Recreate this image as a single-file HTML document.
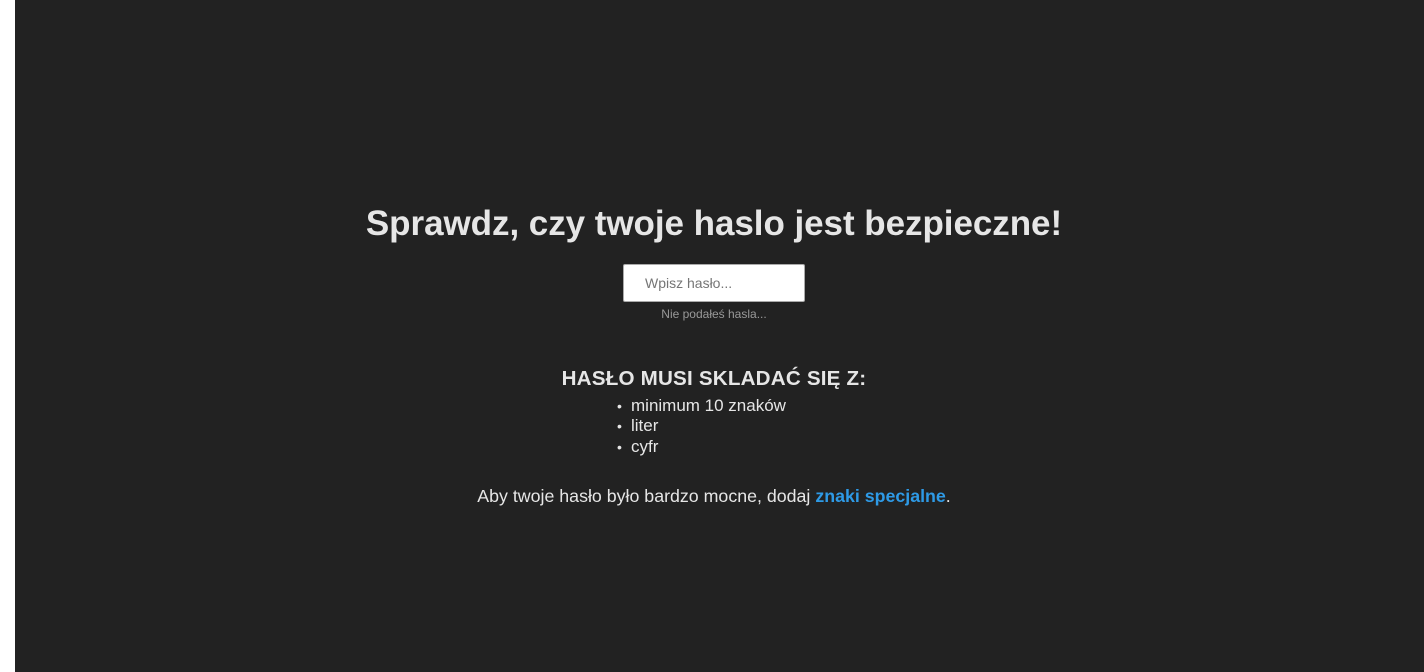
<!DOCTYPE html>
<html><head><meta charset="utf-8"><style>
html,body{margin:0;padding:0;width:1424px;height:672px;overflow:hidden;background:#fff}
#main{position:absolute;left:15px;top:0;width:1409px;height:672px;background:#222;}
.c{position:absolute;left:0;width:1428px;text-align:center;font-family:"Liberation Sans",sans-serif;color:#e6e6e6}
h1{margin:0;font-size:35px;font-weight:bold;letter-spacing:-0.05px}
input{position:absolute;left:623px;top:264px;width:182px;height:38px;box-sizing:border-box;border:1px solid #aaa;border-radius:2px;background:#fff;padding:0 0 0 21px;font-family:"Liberation Sans",sans-serif;font-size:14px;color:#555;outline:none}
ul{margin:0;padding:0;list-style:none;text-align:left;position:absolute;left:617px;top:396px;font-family:"Liberation Sans",sans-serif;font-size:17px;color:#e6e6e6;line-height:19.3px}
ul li:before{content:"•";display:inline-block;width:14px;font-size:14px}
</style></head><body>
<div id="main"></div>
<div class="c" style="top:204px"><h1>Sprawdz, czy twoje haslo jest bezpieczne!</h1></div>
<input placeholder="Wpisz hasło..." value="">
<div class="c" style="top:307px;font-size:12px;color:#999">Nie podałeś hasla...</div>
<div class="c" style="top:367px;font-size:20.6px;font-weight:bold;letter-spacing:0.2px">HASŁO MUSI SKLADAĆ SIĘ Z:</div>
<ul><li>minimum 10 znaków</li><li>liter</li><li>cyfr</li></ul>
<div class="c" style="top:486px;font-size:17.8px">Aby twoje hasło było bardzo mocne, dodaj <b style="color:#2e9ae6">znaki specjalne</b>.</div>
</body></html>
